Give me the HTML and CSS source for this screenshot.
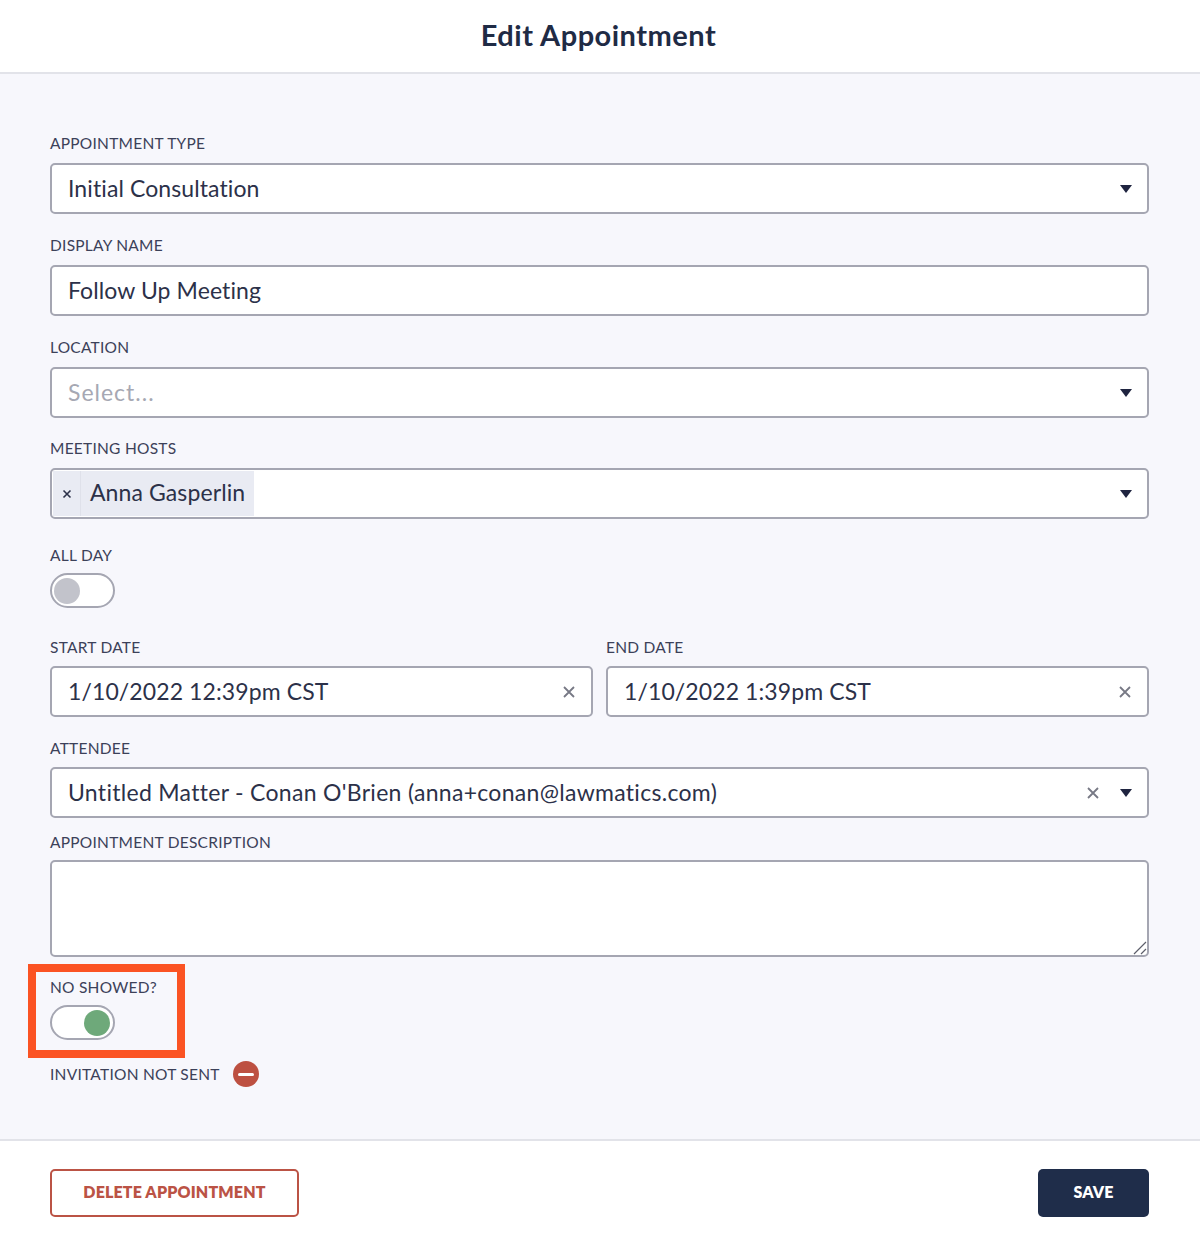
FILE: index.html
```html
<!DOCTYPE html>
<html lang="en">
<head>
  <meta charset="UTF-8" />
  <meta name="viewport" content="width=device-width, initial-scale=1.0"/>
  <title>Edit Appointment</title>
  <link rel="stylesheet" href="styles.css">
</head>
<body>

<div class="modal">
  <header class="modal-header">
    <h1>Edit Appointment</h1>
  </header>

  <main class="modal-body">
    <div class="field">
      <label>Appointment Type</label>
      <div class="input">
        <span class="value">Initial Consultation</span>
        <span class="caret"></span>
      </div>
    </div>

    <div class="field">
      <label>Display Name</label>
      <div class="input">
        <span class="value">Follow Up Meeting</span>
      </div>
    </div>

    <div class="field field-location">
      <label>Location</label>
      <div class="input">
        <span class="value placeholder">Select...</span>
        <span class="caret"></span>
      </div>
    </div>

    <div class="field field-hosts">
      <label>Meeting Hosts</label>
      <div class="input input-tags">
        <span class="tag">
          <span class="tag-remove">
            <svg width="10" height="10" viewBox="0 0 10 10"><path d="M1.5 1.5l7 7M8.5 1.5l-7 7"/></svg>
          </span>
          <span class="tag-label">Anna Gasperlin</span>
        </span>
        <span class="caret"></span>
      </div>
    </div>

    <div class="field field-allday">
      <label>All Day</label>
      <div class="toggle"><span class="knob"></span></div>
    </div>

    <div class="date-row">
      <div class="field">
        <label>Start Date</label>
        <div class="input">
          <span class="value">1/10/2022 12:39pm CST</span>
          <svg class="clear" width="12" height="12" viewBox="0 0 12 12"><path d="M1 1l10 10M11 1L1 11"/></svg>
        </div>
      </div>
      <div class="field">
        <label>End Date</label>
        <div class="input">
          <span class="value">1/10/2022 1:39pm CST</span>
          <svg class="clear" width="12" height="12" viewBox="0 0 12 12"><path d="M1 1l10 10M11 1L1 11"/></svg>
        </div>
      </div>
    </div>

    <div class="field field-attendee">
      <label>Attendee</label>
      <div class="input">
        <span class="value">Untitled Matter - Conan O'Brien (anna+conan@lawmatics.com)</span>
        <svg class="clear clear-gap" width="12" height="12" viewBox="0 0 12 12"><path d="M1 1l10 10M11 1L1 11"/></svg>
        <span class="caret"></span>
      </div>
    </div>

    <div class="field field-desc">
      <label>Appointment Description</label>
      <div class="textarea">
        <svg class="grip" width="14" height="14" viewBox="0 0 14 14"><path d="M1 13L13 1M8 13l5-5"/></svg>
      </div>
    </div>

    <div class="field field-noshow">
      <div class="highlight"></div>
      <label>No Showed?</label>
      <div class="toggle toggle-on"><span class="knob"></span></div>
    </div>

    <div class="invite-status">
      <span>Invitation Not Sent</span>
      <span class="status-icon"></span>
    </div>
  </main>

  <footer class="modal-footer">
    <button class="btn btn-delete">Delete Appointment</button>
    <button class="btn btn-save">Save</button>
  </footer>
</div>

</body>
</html>
```

FILE: styles.css
```css
* {
  box-sizing: border-box;
}

body {
  margin: 0;
  font-family: Lato, "Open Sans", sans-serif;
  color: #2c3149;
  background: #fff;
}

.modal {
  display: flex;
  flex-direction: column;
  min-height: 100vh;
}

.modal-header {
  height: 74px;
  display: flex;
  align-items: center;
  justify-content: center;
  padding: 0 3px 3px 0;
  background: #fff;
  border-bottom: 2px solid #e2e3e9;
}

h1 {
  margin: 0;
  font-size: 29px;
  font-weight: 700;
  color: #1f2b45;
  letter-spacing: 0.5px;
}

.modal-body {
  flex: 1;
  padding: 59px 51px 0 50px;
  background: #f7f7fc;
}

.field {
  margin-bottom: 21px;
}

.field-location {
  margin-bottom: 20px;
}

label {
  display: block;
  height: 20px;
  margin-bottom: 10px;
  font-size: 15.5px;
  line-height: 20px;
  letter-spacing: 0.25px;
  text-transform: uppercase;
  color: #3c4159;
}

.input {
  height: 51px;
  display: flex;
  align-items: center;
  padding: 0 15px 2px 16px;
  background: #fff;
  border: 2px solid #a5a6b2;
  border-radius: 5px;
  font-size: 23px;
  letter-spacing: 0.1px;
}

.value {
  flex: 1;
  white-space: nowrap;
}

.placeholder {
  color: #a6a8b3;
  letter-spacing: 1px;
}

.field-attendee .value {
  letter-spacing: 0.3px;
}

.caret {
  width: 0;
  height: 0;
  margin-top: 2px;
  border-left: 6.5px solid transparent;
  border-right: 6.5px solid transparent;
  border-top: 8px solid #1f2440;
}

.clear {
  margin: 2px 1px 0 0;
  fill: none;
  stroke: #777985;
  stroke-width: 1.8;
}

.clear-gap {
  margin-right: 21px;
}

.input-tags {
  padding: 0 15px 0 1px;
}

.input-tags .caret {
  margin-top: 0;
}

.tag {
  display: flex;
  height: 45px;
  margin-right: auto;
  background: #e9ebf3;
}

.tag-remove {
  width: 28px;
  display: flex;
  align-items: center;
  justify-content: center;
  border-right: 1px solid #dfe1ea;
}

.tag-remove svg {
  fill: none;
  stroke: #2c3149;
  stroke-width: 1.6;
}

.tag-label {
  padding: 0 9px;
  line-height: 42px;
}

.toggle {
  width: 65px;
  height: 35px;
  display: flex;
  align-items: center;
  padding: 0 2px;
  background: #fff;
  border: 2px solid #a5a6b2;
  border-radius: 18px;
}

.knob {
  width: 26px;
  height: 26px;
  border-radius: 50%;
  background: #c2c3cb;
}

.toggle-on {
  justify-content: flex-end;
  padding: 0 3px;
}

.toggle-on .knob {
  background: #6ea97a;
}

.field-allday {
  margin: 26px 0 29px;
}

.field-allday label {
  margin-bottom: 8px;
}

.date-row {
  display: grid;
  grid-template-columns: 1fr 1fr;
  gap: 13px;
}

.date-row label,
.field-attendee label {
  margin-bottom: 9px;
}

.field-attendee {
  margin-bottom: 14px;
}

.field-desc {
  margin-bottom: 20px;
}

.field-desc label {
  margin-bottom: 8px;
}

.textarea {
  position: relative;
  height: 97px;
  background: #fff;
  border: 2px solid #a5a6b2;
  border-radius: 5px;
}

.grip {
  position: absolute;
  right: 0;
  bottom: 0;
  fill: none;
  stroke: #5d5f6b;
  stroke-width: 1.2;
}

.field-noshow {
  position: relative;
  margin-bottom: 21px;
}

.field-noshow label {
  margin-bottom: 8px;
}

.highlight {
  position: absolute;
  left: -22px;
  top: -13px;
  width: 157px;
  height: 94px;
  border: 8px solid #fb5323;
}

.invite-status {
  display: flex;
  align-items: center;
  gap: 13px;
  height: 26px;
  font-size: 15.5px;
  letter-spacing: 0.25px;
  text-transform: uppercase;
  color: #3c4159;
}

.status-icon {
  position: relative;
  width: 26px;
  height: 26px;
  border-radius: 50%;
  background: #bd5041;
}

.status-icon::after {
  content: "";
  position: absolute;
  left: 5px;
  right: 5px;
  top: 11.5px;
  height: 3px;
  border-radius: 2px;
  background: #fff;
}

.modal-footer {
  height: 102px;
  display: flex;
  align-items: center;
  justify-content: space-between;
  padding: 4px 51px 0 50px;
  background: #fff;
  border-top: 2px solid #e2e3e9;
}

.btn {
  height: 48px;
  padding: 0 0 3px;
  border-radius: 5px;
  font-family: Lato, sans-serif;
  font-size: 16px;
  font-weight: 800;
  letter-spacing: 0.15px;
  text-transform: uppercase;
}

.btn-delete {
  width: 249px;
  background: #fff;
  color: #bb5345;
  border: 2px solid #bb5345;
}

.btn-save {
  width: 111px;
  background: #1f2d4a;
  color: #fff;
  border: none;
}
```
